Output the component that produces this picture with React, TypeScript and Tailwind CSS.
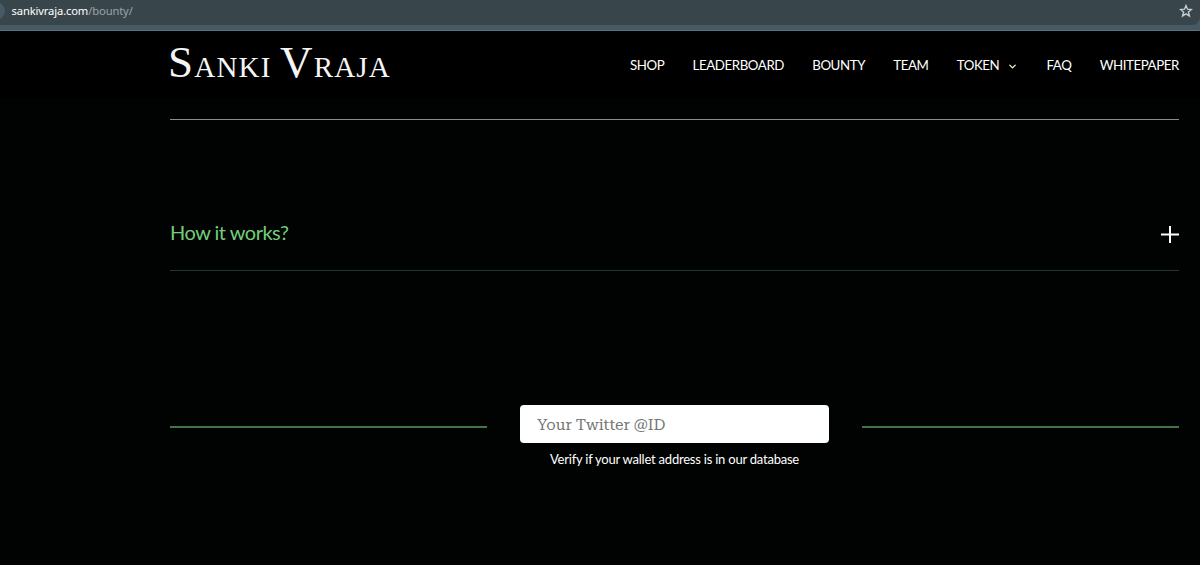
import { ChevronDown } from "lucide-react";

function AddressBar() {
    return (
        <div className="h-[31px] bg-[#455a64] border-b border-[#5d7078]">
            <div className="flex items-center h-[25px] bg-[#38464c] rounded-br-lg overflow-hidden">
                <div className="w-[18px] h-[18px] -ml-[13px] mt-[-3px] rounded-full bg-[#455a64]" />
                <div className="ml-[6.5px] mt-[-3px] font-['Noto_Sans',sans-serif] text-[11.2px] leading-4 tracking-[-0.13px] text-[#9ba4a8]">
                    <span className="text-white">sankivraja.com</span>/bounty/
                </div>
                <svg className="ml-auto mr-[7px] mt-[-4px] w-[14px] h-[14px]" viewBox="0 0 14 14" fill="none" stroke="#c7cccf" strokeWidth="1.4">
                    <path d="M7 1.6 8.5 5.2 12.4 5.5 9.4 8 10.4 11.9 7 9.8 3.6 11.9 4.6 8 1.6 5.5 5.5 5.2Z" />
                </svg>
            </div>
        </div>
    );
}

function Logo() {
    return (
        <div className="-ml-[2px] pt-px font-['Liberation_Serif',serif] text-[29px] leading-[45px] tracking-[1.2px] text-[#f5f5f5] whitespace-nowrap">
            <span className="text-[45px]">S</span>ANKI <span className="text-[45px]">V</span>RAJA
        </div>
    );
}

function Navigation() {
    return (
        <nav className="flex justify-between w-[549px] text-[13.3px] leading-5 tracking-[-0.42px] text-white whitespace-nowrap">
            <a>SHOP</a>
            <a>LEADERBOARD</a>
            <a>BOUNTY</a>
            <a>TEAM</a>
            <a className="flex items-center">
                TOKEN
                <ChevronDown className="ml-2 mt-[3px] w-[11px] h-[11px] text-[#ecf5cf]" strokeWidth={3} />
            </a>
            <a>FAQ</a>
            <a>WHITEPAPER</a>
        </nav>
    );
}

function HowItWorks() {
    return (
        <section className="flex items-center justify-between h-[151px] pt-[77px] border-b border-[#203824]">
            <h2 className="-mt-[3px] text-[20px] leading-6 tracking-[-0.5px] text-[#73cd7b]">How it works?</h2>
            <svg className="mt-px w-[19px] h-[19px]" viewBox="0 0 19 19" stroke="white" strokeWidth="2">
                <path d="M1 9.5h18M10 1v17" />
            </svg>
        </section>
    );
}

function WalletCheck() {
    return (
        <section className="flex items-start justify-between mt-[134px]">
            <div className="mt-[21px] w-[317px] h-[2px] bg-[#427447]" />
            <div className="w-[309px]">
                <input
                    className="block w-full h-[38px] px-[17px] pt-[2px] rounded-[4px] bg-white font-['Roboto_Slab','Roboto_Serif','DejaVu_Serif',serif] text-[15.4px] placeholder:text-[#757575] placeholder:opacity-100"
                    placeholder="Your Twitter @ID"
                />
                <p className="mt-[6px] text-center text-[13px] leading-5 tracking-[-0.22px] text-white">
                    Verify if your wallet address is in our database
                </p>
            </div>
            <div className="mt-[21px] w-[317px] h-[2px] bg-[#427447]" />
        </section>
    );
}

export default function App() {
    return (
        <div className="h-[565px] overflow-hidden bg-[#010302] font-[Lato,sans-serif]">
            <AddressBar />
            <header className="flex items-center justify-between h-[67px] pl-[170px] pr-[21px] bg-black">
                <Logo />
                <Navigation />
            </header>
            <main className="pl-[170px] pr-[21px] pt-[21px]">
                <div className="h-px bg-[#8a8e8a]" />
                <HowItWorks />
                <WalletCheck />
            </main>
        </div>
    );
}
